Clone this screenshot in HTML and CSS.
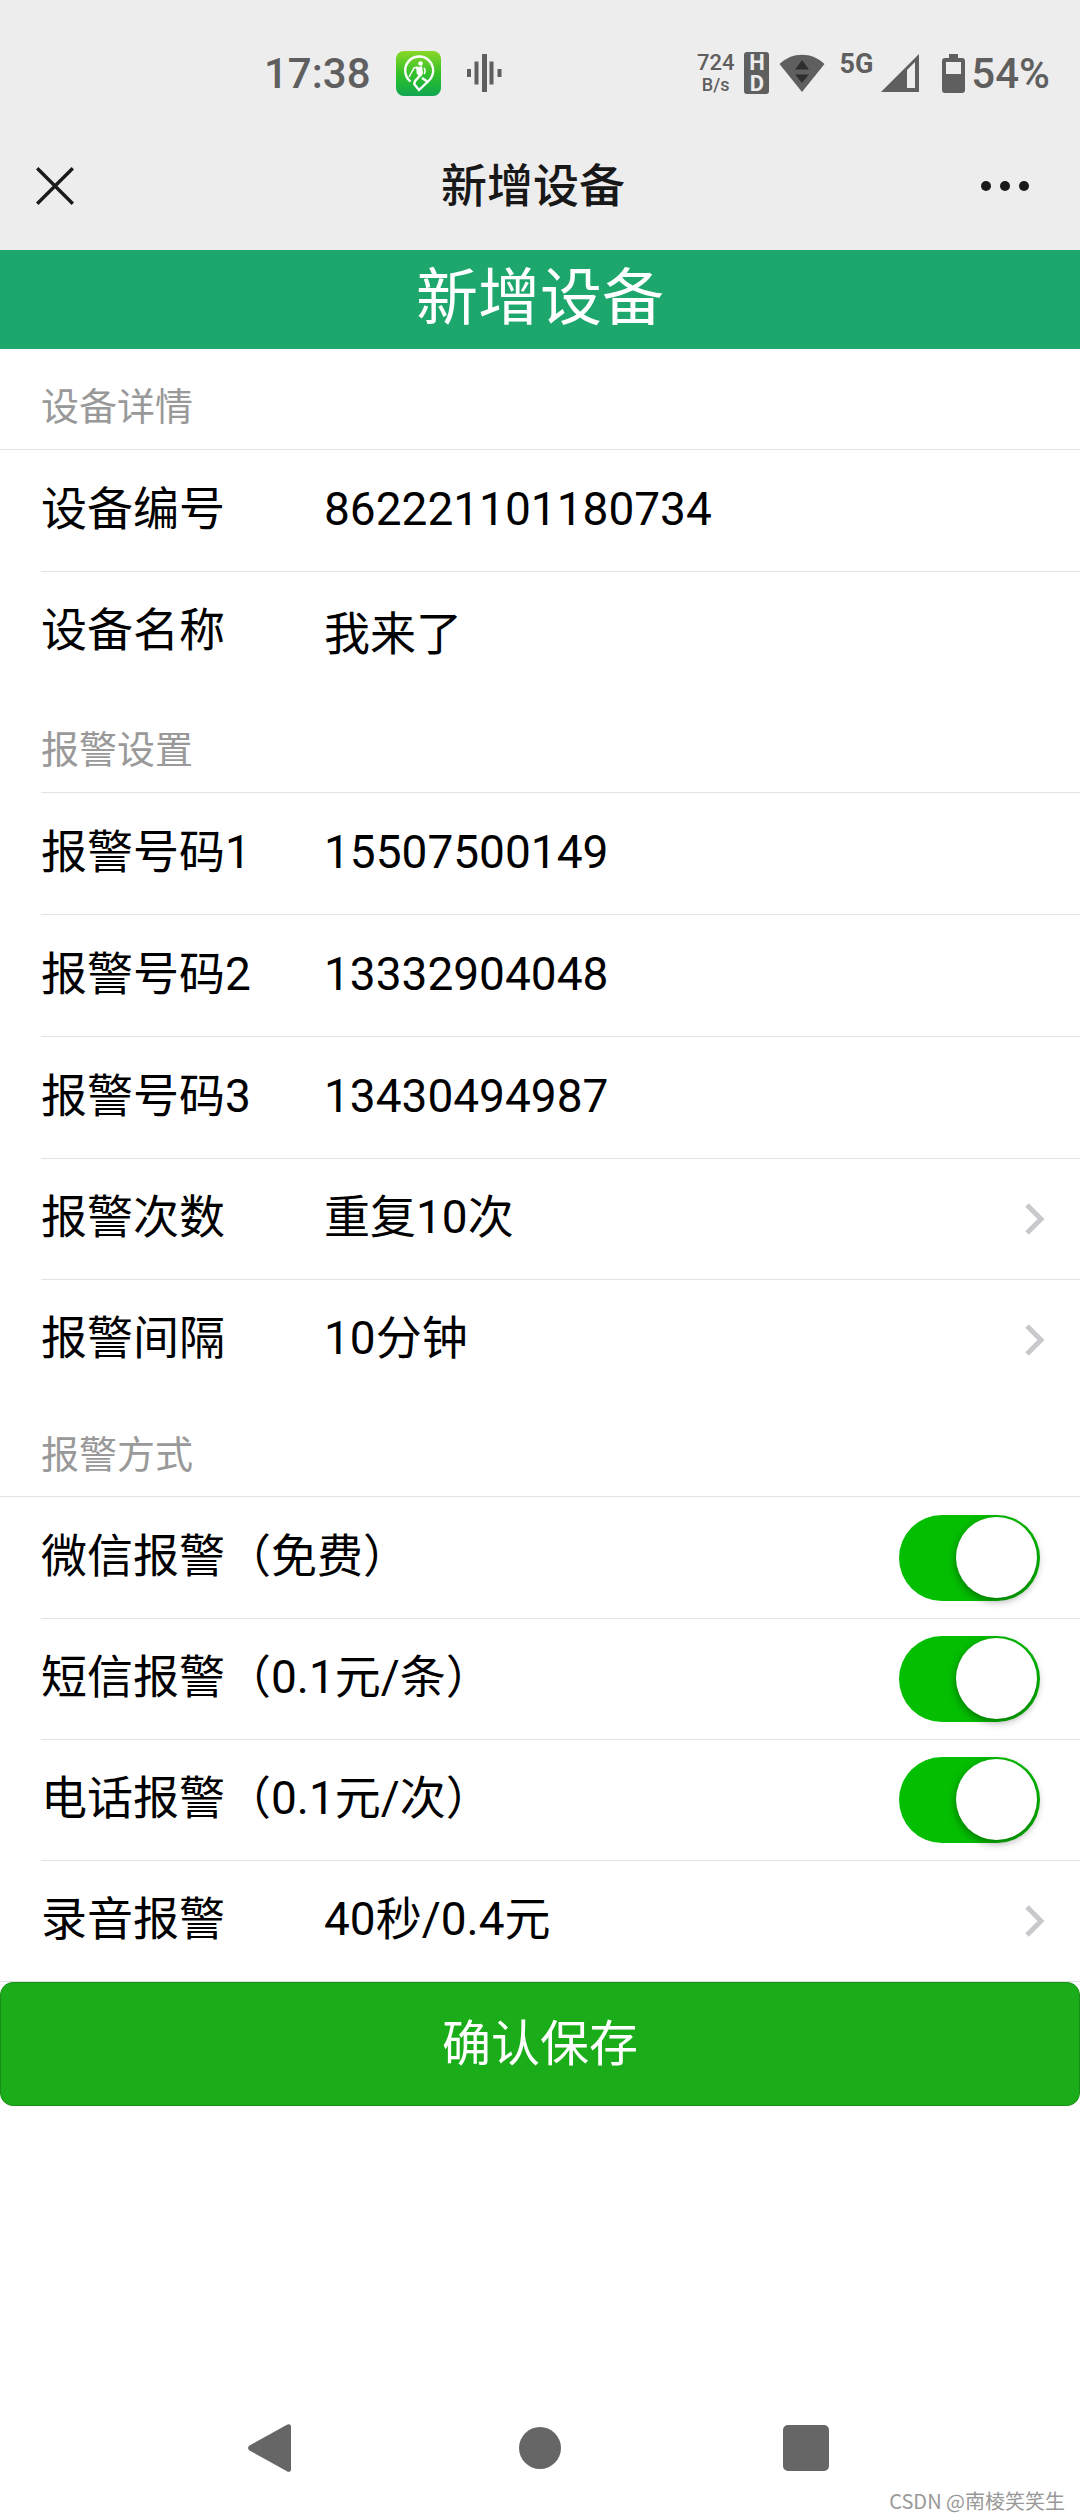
FILE: index.html
```html
<!DOCTYPE html>
<html lang="zh-CN">
<head>
<meta charset="utf-8">
<meta name="viewport" content="width=device-width, initial-scale=1">
<title>新增设备</title>
<link rel="stylesheet" href="styles.css">
</head>
<body>
<div class="screen">
  <header class="top">
    <div class="status">
      <div class="status-left">
        <span class="status-text">17:38</span>
        <svg class="app-icon" width="45" height="45" viewBox="0 0 45 45" aria-hidden="true">
          <defs>
            <linearGradient id="app-bg" x1="0" y1="0" x2="0" y2="1">
              <stop offset="0" stop-color="#8ad828"/>
              <stop offset="0.5" stop-color="#34c029"/>
              <stop offset="0.75" stop-color="#1eb63a"/>
              <stop offset="1" stop-color="#12a552"/>
            </linearGradient>
          </defs>
          <rect width="45" height="45" rx="8" fill="url(#app-bg)"/>
          <g fill="none" stroke="#fff" stroke-width="2.400">
            <path d="M14.500 30.500A14 14 0 1 1 33 29.500L23 39l-4.500-5.500c-1.500-4 4.500-6 5-9"/>
            <path d="M26 27l6 4"/>
          </g>
          <path d="M13 26l5-9 4-1M28 17c1.500 2 1.500 4 0 6" fill="none" stroke="#fff" stroke-width="1.500"/>
          <path d="M20 17l6-2 1 7-2 4-2-1-2-2c-1-2 0-3-1-6z" fill="#fff"/>
          <circle cx="24.500" cy="12.500" r="2.300" fill="#fff"/>
        </svg>
        <svg class="wave-icon" width="35" height="38" viewBox="0 0 35 38" fill="#5f5f5f" aria-hidden="true">
          <rect x="0" y="15" width="4" height="8"/>
          <rect x="7.500" y="7.500" width="4" height="23"/>
          <rect x="15" y="0" width="5" height="38"/>
          <rect x="22.500" y="7.500" width="4" height="23"/>
          <rect x="30.500" y="15" width="4" height="8"/>
        </svg>
      </div>
      <div class="status-right">
        <span class="speed"><span class="speed-value">724</span><span class="speed-unit">B/s</span></span>
        <span class="hd"><span>H</span><span>D</span></span>
        <svg class="wifi" width="46" height="38" viewBox="0 0 46 38" aria-hidden="true">
          <path d="M0.500 10C13-2.500 33-2.500 45.500 10L23 38z" fill="#5f5f5f"/>
          <path d="M16 15.500h14L23 6zM16 20.500h14L23 29z" fill="#2e2e2e"/>
        </svg>
        <span class="network">5G</span>
        <svg class="signal" width="38" height="38" viewBox="0 0 38 38" aria-hidden="true">
          <path d="M0 38L38 0v38zM26 16v18h8V8z" fill="#5f5f5f" fill-rule="evenodd"/>
        </svg>
        <svg class="battery" width="23" height="39" viewBox="0 0 23 39" aria-hidden="true">
          <path d="M7 0h9v4h4a3 3 0 0 1 3 3v29a3 3 0 0 1-3 3H3a3 3 0 0 1-3-3V7a3 3 0 0 1 3-3h4zM4 8v12h15V8z" fill="#5f5f5f" fill-rule="evenodd"/>
        </svg>
        <span class="status-text">54%</span>
      </div>
    </div>
    <nav class="titlebar">
      <button class="icon-button close" type="button" aria-label="关闭">
        <svg width="38" height="38" viewBox="0 0 38 38" fill="none" stroke="#1a1a1a" stroke-width="3.400"><path d="M1.200 1.200l35.600 35.600M36.800 1.200L1.200 36.800"/></svg>
      </button>
      <span class="title">新增设备</span>
      <button class="icon-button more" type="button" aria-label="更多">
        <svg width="50" height="12" viewBox="0 0 50 12" fill="#1a1a1a"><circle cx="6" cy="6" r="5"/><circle cx="25" cy="6" r="5"/><circle cx="44" cy="6" r="5"/></svg>
      </button>
    </nav>
  </header>

  <main>
    <h1 class="banner">新增设备</h1>
    <form class="form">
      <h2 class="section-title">设备详情</h2>
      <div class="cells">
        <div class="cell"><label class="label" for="device-id">设备编号</label><input class="value" id="device-id" type="text" value="862221101180734"></div>
        <div class="cell"><label class="label" for="device-name">设备名称</label><input class="value" id="device-name" type="text" value="我来了"></div>
      </div>

      <h2 class="section-title">报警设置</h2>
      <div class="cells cells-inset">
        <div class="cell cell-phone"><label class="label" for="phone-1">报警号码1</label><input class="value" id="phone-1" type="tel" value="15507500149"></div>
        <div class="cell cell-phone"><label class="label" for="phone-2">报警号码2</label><input class="value" id="phone-2" type="tel" value="13332904048"></div>
        <div class="cell cell-phone"><label class="label" for="phone-3">报警号码3</label><input class="value" id="phone-3" type="tel" value="13430494987"></div>
        <div class="cell"><label class="label" for="repeat">报警次数</label><select class="value" id="repeat"><option>重复10次</option></select><svg class="chevron" width="20" height="32" viewBox="0 0 20 32"><path d="M2 2l14 14L2 30"/></svg></div>
        <div class="cell"><label class="label" for="interval">报警间隔</label><select class="value" id="interval"><option>10分钟</option></select><svg class="chevron" width="20" height="32" viewBox="0 0 20 32"><path d="M2 2l14 14L2 30"/></svg></div>
      </div>

      <h2 class="section-title section-title-tight">报警方式</h2>
      <div class="cells">
        <div class="cell cell-switch"><label class="label-wide" for="by-wechat">微信报警（免费）</label><input class="switch" id="by-wechat" type="checkbox" checked></div>
        <div class="cell cell-switch"><label class="label-wide" for="by-sms">短信报警（0.1元/条）</label><input class="switch" id="by-sms" type="checkbox" checked></div>
        <div class="cell cell-switch"><label class="label-wide" for="by-call">电话报警（0.1元/次）</label><input class="switch" id="by-call" type="checkbox" checked></div>
        <div class="cell"><label class="label" for="recording">录音报警</label><select class="value" id="recording"><option>40秒/0.4元</option></select><svg class="chevron" width="20" height="32" viewBox="0 0 20 32"><path d="M2 2l14 14L2 30"/></svg></div>
      </div>
      <div class="actions"><button class="save" type="submit">确认保存</button></div>
    </form>
  </main>

  <footer class="system-nav">
    <button class="icon-button" type="button" aria-label="返回">
      <svg width="52" height="50" viewBox="0 0 52 50" fill="#666"><path d="M1.500 22.500L38.500 2c2-1.500 4.500-1 4.500 1.500v43c0 2.500-2.500 3-4.500 1.500L1.500 27.500c-2-1.500-2-3.500 0-5z"/></svg>
    </button>
    <button class="icon-button" type="button" aria-label="主屏幕">
      <svg width="42" height="42" viewBox="0 0 42 42" fill="#666"><circle cx="21" cy="21" r="21"/></svg>
    </button>
    <button class="icon-button" type="button" aria-label="最近任务">
      <svg width="46" height="46" viewBox="0 0 46 46" fill="#666"><rect width="46" height="46" rx="5"/></svg>
    </button>
    <span class="watermark">CSDN @南棱笑笑生</span>
  </footer>
</div>
</body>
</html>
```
FILE: styles.css
```css
* { box-sizing: border-box; }

body {
  margin: 0;
  background: #fff;
  color: #000;
  font-family: Roboto, "Noto Sans CJK SC", sans-serif;
  font-size: 46px;
}

button, input, select { font: inherit; color: inherit; }

svg { display: block; flex: none; }

.screen {
  display: flex;
  flex-direction: column;
  min-height: 100vh;
}

main { flex: 1; }

.top { background: #ededed; }

/* System status bar */
.status {
  display: flex;
  justify-content: space-between;
  align-items: center;
  height: 122px;
  padding: 24px 30px 0 264px;
  color: #5f5f5f;
  font-weight: 500;
}

.status-left, .status-right { display: flex; align-items: center; }

.status-text { font-size: 42px; line-height: 50px; padding-top: 2px; }

.app-icon { margin-left: 25px; }
.wave-icon { margin-left: 26px; }

.speed {
  display: flex;
  flex-direction: column;
  align-items: center;
  font-size: 22px;
  line-height: 24px;
}

.speed-unit { font-size: 18px; line-height: 20px; }

.hd {
  display: flex;
  flex-direction: column;
  align-items: center;
  width: 25px;
  margin-left: 10px;
  border-radius: 3px;
  background: #5f5f5f;
  color: #ededed;
  font-size: 22px;
  font-weight: 700;
  line-height: 21px;
}

.wifi { margin-left: 10px; }

.network {
  align-self: flex-start;
  margin-left: 14px;
  font-size: 27px;
  font-weight: 700;
  line-height: 34px;
}

.signal { margin-left: 8px; }
.battery { margin: 0 6px 0 23px; }

/* Page title bar */
.titlebar {
  display: grid;
  grid-template-columns: 1fr auto 1fr;
  align-items: center;
  height: 128px;
  padding: 0 50px 0 36px;
}

.close { justify-self: start; }
.more { justify-self: end; }

.title {
  color: #181818;
  font-weight: 500;
  line-height: 64px;
}

.icon-button {
  padding: 0;
  border: 0;
  background: none;
}

.banner {
  margin: 0;
  padding: 4px 0 5px;
  background: #1ea76d;
  color: #fff;
  font-size: 62px;
  font-weight: 400;
  line-height: 90px;
  text-align: center;
}

.section-title {
  margin: 0;
  padding: 30px 41px 13px;
  color: #999;
  font-size: 38px;
  font-weight: 400;
  line-height: 57px;
}

.section-title-tight { padding: 27px 41px 12px; }

/* Form rows */
.cells { border-top: 1px solid #e2e2e2; }

.cells-inset { border-top: 0; }
.cells-inset .cell:first-child { border-top: 1px solid #e2e2e2; }

.cell {
  display: flex;
  align-items: center;
  min-height: 121px;
  margin-left: 41px;
  padding-right: 35px;
  line-height: 64px;
}

.cell-phone { min-height: 122px; }
.cell-switch { padding-right: 40px; }
.cell + .cell { border-top: 1px solid #e2e2e2; }

.label { flex: none; width: 283px; padding-bottom: 4px; }
.label-wide { flex: 1; padding-bottom: 4px; }

.value {
  flex: 1;
  min-width: 0;
  height: 68px;
  margin: 0;
  padding: 0 0 4px;
  border: 0;
  outline: 0;
  background: none;
  appearance: none;
}

.chevron {
  fill: none;
  stroke: #c8c8cd;
  stroke-width: 5;
}

.switch {
  flex: none;
  display: flex;
  justify-content: flex-end;
  width: 141px;
  height: 86px;
  margin: 0;
  padding: 2px 3px;
  border-radius: 43px;
  background: #dfdfdf;
  appearance: none;
}

.switch:checked { background: #04be02; }

.switch::before {
  content: "";
  width: 81px;
  height: 81px;
  border-radius: 50%;
  background: #fff;
  box-shadow: 0 3px 8px rgba(0, 0, 0, 0.4);
}

.switch:not(:checked) { justify-content: flex-start; }

.actions { border-top: 1px solid #e2e2e2; }

.save {
  display: block;
  width: 100%;
  height: 124px;
  padding: 0 0 10px;
  border: 1px solid #178f17;
  border-radius: 13px;
  background: #1aad19;
  color: #fff;
  font-size: 49px;
}

/* System navigation */
.system-nav {
  position: relative;
  display: grid;
  grid-template-columns: repeat(3, 266px);
  justify-content: center;
  justify-items: center;
  align-items: center;
  height: 144px;
}

.watermark {
  position: absolute;
  right: 15px;
  bottom: 4px;
  color: #999;
  font-family: "Noto Sans CJK SC", sans-serif;
  font-size: 20px;
  line-height: 30px;
}
```
